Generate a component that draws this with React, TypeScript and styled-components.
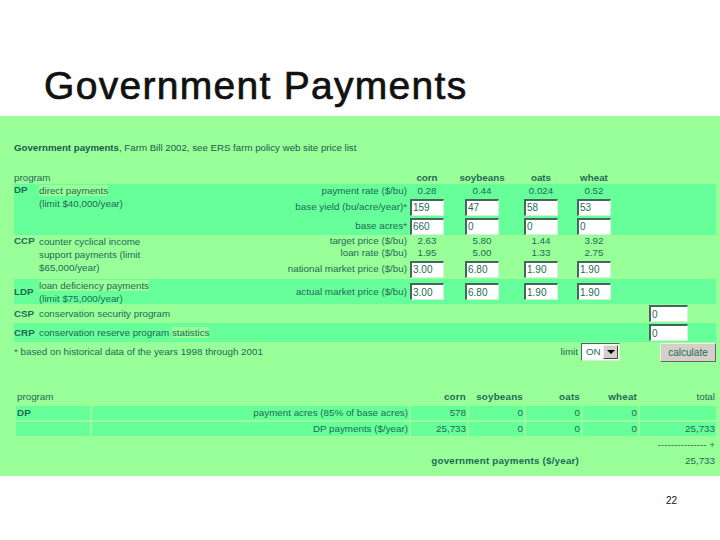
import styled, { createGlobalStyle } from 'styled-components';

const GlobalStyle = createGlobalStyle`
    html, body {
        margin: 0;
        padding: 0;
        background: #fff;
    }
    body {
        font-family: "Liberation Sans", Arial, sans-serif;
    }
`;

const textColor = '#1e6a55';
const band = '#66ff99';
const panel = '#99ff99';

const Slide = styled.div`
    width: 720px;
    height: 540px;
    display: flex;
    flex-direction: column;
    overflow: hidden;
`;

const Title = styled.h1`
    height: 116px;
    margin: 0;
    padding: 62px 0 0 44px;
    box-sizing: border-box;
    font-size: 39px;
    line-height: 48px;
    font-weight: 400;
    letter-spacing: 1.3px;
    -webkit-text-stroke: 0.7px #111;
    color: #111;
`;

const Panel = styled.section`
    height: 360px;
    background: ${panel};
    color: ${textColor};
    font-size: 9.8px;
    line-height: 12px;
    padding: 26px 4px 0 14px;
    box-sizing: border-box;
`;

const Heading = styled.div`
    height: 30px;
    color: #1c5a4c;
    font-size: 9.7px;
`;

const Band = styled.div<{ $on?: boolean; $h: number }>`
    display: grid;
    grid-template-columns: 25px 130px 1fr;
    align-items: center;
    height: ${({ $h }) => $h}px;
    background: ${({ $on }) => ($on ? band : 'transparent')};
`;

const Code = styled.div`
    font-weight: 700;
`;

const TopCode = styled(Code)`
    align-self: start;
`;

const Desc = styled.div`
    white-space: nowrap;
    line-height: 13px;
`;

const TopDesc = styled(Desc)`
    align-self: start;
`;

const Link = styled.span`
    background: ${panel};
`;

const Metrics = styled.div`
    display: flex;
    flex-direction: column;
    align-self: stretch;
`;

const MetricRow = styled.div<{ $h: number }>`
    display: grid;
    grid-template-columns: 1fr 55px 59px 53px 63px 76px;
    align-items: center;
    height: ${({ $h }) => $h}px;
`;

const Label = styled.div`
    text-align: right;
    padding-right: 3px;
    white-space: nowrap;
`;

const Value = styled.div`
    width: 34px;
    display: flex;
    justify-content: center;
    white-space: nowrap;
`;

const Head = styled(Value)`
    font-weight: 700;
`;

const Field = styled.input<{ $w?: number }>`
    width: ${({ $w }) => $w ?? 34}px;
    height: 17px;
    box-sizing: border-box;
    background: #fff;
    border-style: solid;
    border-width: 2px 1px 1px 2px;
    border-color: #41685a #d4f0da #d4f0da #41685a;
    padding: 0 0 0 1px;
    font: 10px "Liberation Sans", Arial, sans-serif;
    color: ${textColor};
    outline: none;
`;

const SingleRow = styled.div<{ $on?: boolean; $h: number }>`
    display: flex;
    align-items: center;
    height: ${({ $h }) => $h}px;
    background: ${({ $on }) => ($on ? band : 'transparent')};
`;

const CodeSlot = styled(Code)`
    width: 25px;
`;

const Grow = styled.div`
    flex: 1;
    white-space: nowrap;
`;

const WideSlot = styled.div`
    padding-right: 28px;
    display: flex;
`;

const NoteRow = styled.div`
    height: 20px;
    display: flex;
    align-items: center;
`;

const LimitLabel = styled.span`
    margin-right: 3px;
`;

const SelectBox = styled.div`
    width: 39px;
    height: 18px;
    margin-right: 40px;
    box-sizing: border-box;
    background: #fff;
    border: 1px solid;
    border-color: #41685a #d4f0da #d4f0da #41685a;
    display: flex;
    align-items: center;
    justify-content: space-between;
    padding: 0 1px 0 4px;
`;

const SelectArrow = styled.span`
    width: 15px;
    height: 14px;
    background: #d4d0c8;
    border: 1px solid;
    border-color: #eee #444 #444 #eee;
    box-sizing: border-box;
    display: flex;
    align-items: center;
    justify-content: center;
    &::after {
        content: '';
        border-left: 4px solid transparent;
        border-right: 4px solid transparent;
        border-top: 4px solid #000;
    }
`;

const Calc = styled.button`
    width: 56px;
    height: 19px;
    padding: 0;
    background: #d4d0c8;
    border: 1px solid;
    border-color: #eee #666 #666 #eee;
    color: ${textColor};
    font: 10px "Liberation Sans", Arial, sans-serif;
`;

const Results = styled.div`
    margin: 28px 0 0 2px;
    display: grid;
    grid-template-columns: 74px 317px 56px 55px 55px 55px 76px;
    grid-auto-rows: 14px;
    gap: 2px;
    width: 699px;
`;

const Cell = styled.div<{ $on?: boolean; $bold?: boolean; $left?: boolean; $span?: number }>`
    background: ${({ $on }) => ($on ? band : 'transparent')};
    font-weight: ${({ $bold }) => ($bold ? 700 : 400)};
    letter-spacing: ${({ $bold }) => ($bold ? '0.2px' : '0')};
    text-align: ${({ $left }) => ($left ? 'left' : 'right')};
    padding: 0 1px;
    white-space: nowrap;
    line-height: 14px;
    ${({ $span }) => ($span ? `grid-column: span ${$span};` : '')}
`;

const GrandLabel = styled(Cell)`
    padding-right: 2px;
`;

const Rule = styled.div`
    grid-column: 7;
    text-align: right;
    line-height: 14px;
    padding-right: 1px;
    white-space: nowrap;
    overflow: hidden;
`;

const Footer = styled.footer`
    flex: 1;
    display: flex;
    justify-content: flex-end;
    padding: 19px 43px 0 0;
    font-size: 10px;
    line-height: 12px;
    color: #111;
`;

const crops = ['corn', 'soybeans', 'oats', 'wheat'];

type MetricProps = { label: string; h: number; values?: string[]; inputs?: string[] };

function Metric({ label, h, values, inputs }: MetricProps) {
    return (
        <MetricRow $h={h}>
            <Label>{label}</Label>
            {values && values.map((v, i) => <Value key={i}>{v}</Value>)}
            {inputs && inputs.map((v, i) => <Field key={i} defaultValue={v} />)}
        </MetricRow>
    );
}

export default function App() {
    return (
        <Slide>
            <GlobalStyle />
            <Title>Government Payments</Title>
            <Panel>
                <Heading>
                    <b>Government payments</b>, Farm Bill 2002, see ERS farm policy web site price list
                </Heading>

                <MetricRow $h={12}>
                    <div>program</div>
                    {crops.map((c) => <Head key={c}>{c}</Head>)}
                </MetricRow>

                <Band $on $h={51}>
                    <TopCode>DP</TopCode>
                    <TopDesc>
                        <Link>direct payments</Link>
                        <br />
                        (limit $40,000/year)
                    </TopDesc>
                    <Metrics>
                        <Metric label="payment rate ($/bu)" h={13} values={['0.28', '0.44', '0.024', '0.52']} />
                        <Metric label="base yield (bu/acre/year)*" h={20} inputs={['159', '47', '58', '53']} />
                        <Metric label="base acres*" h={18} inputs={['660', '0', '0', '0']} />
                    </Metrics>
                </Band>

                <Band $h={44}>
                    <TopCode>CCP</TopCode>
                    <TopDesc>
                        counter cyclical income
                        <br />
                        support payments (limit
                        <br />
                        $65,000/year)
                    </TopDesc>
                    <Metrics>
                        <Metric label="target price ($/bu)" h={12} values={['2.63', '5.80', '1.44', '3.92']} />
                        <Metric label="loan rate ($/bu)" h={12} values={['1.95', '5.00', '1.33', '2.75']} />
                        <Metric label="national market price ($/bu)" h={20} inputs={['3.00', '6.80', '1.90', '1.90']} />
                    </Metrics>
                </Band>

                <Band $on $h={25}>
                    <Code>LDP</Code>
                    <Desc>
                        <Link>loan deficiency payments</Link>
                        <br />
                        (limit $75,000/year)
                    </Desc>
                    <Metrics>
                        <Metric label="actual market price ($/bu)" h={25} inputs={['3.00', '6.80', '1.90', '1.90']} />
                    </Metrics>
                </Band>

                <SingleRow $h={19}>
                    <CodeSlot>CSP</CodeSlot>
                    <Grow>conservation security program</Grow>
                    <WideSlot><Field $w={39} defaultValue="0" /></WideSlot>
                </SingleRow>

                <SingleRow $on $h={19}>
                    <CodeSlot>CRP</CodeSlot>
                    <Grow>conservation reserve program <Link>statistics</Link></Grow>
                    <WideSlot><Field $w={39} defaultValue="0" /></WideSlot>
                </SingleRow>

                <NoteRow>
                    <Grow>* based on historical data of the years 1998 through 2001</Grow>
                    <LimitLabel>limit</LimitLabel>
                    <SelectBox>ON<SelectArrow /></SelectBox>
                    <Calc>calculate</Calc>
                </NoteRow>

                <Results>
                    <Cell $left>program</Cell>
                    <Cell />
                    <Cell $bold>corn</Cell>
                    <Cell $bold>soybeans</Cell>
                    <Cell $bold>oats</Cell>
                    <Cell $bold>wheat</Cell>
                    <Cell>total</Cell>

                    <Cell $on $left $bold>DP</Cell>
                    <Cell $on>payment acres (85% of base acres)</Cell>
                    <Cell $on>578</Cell>
                    <Cell $on>0</Cell>
                    <Cell $on>0</Cell>
                    <Cell $on>0</Cell>
                    <Cell $on />

                    <Cell $on />
                    <Cell $on>DP payments ($/year)</Cell>
                    <Cell $on>25,733</Cell>
                    <Cell $on>0</Cell>
                    <Cell $on>0</Cell>
                    <Cell $on>0</Cell>
                    <Cell $on>25,733</Cell>

                    <Rule>--------------- +</Rule>

                    <GrandLabel $bold $span={5}>government payments ($/year)</GrandLabel>
                    <Cell />
                    <Cell>25,733</Cell>
                </Results>
            </Panel>
            <Footer>22</Footer>
        </Slide>
    );
}
